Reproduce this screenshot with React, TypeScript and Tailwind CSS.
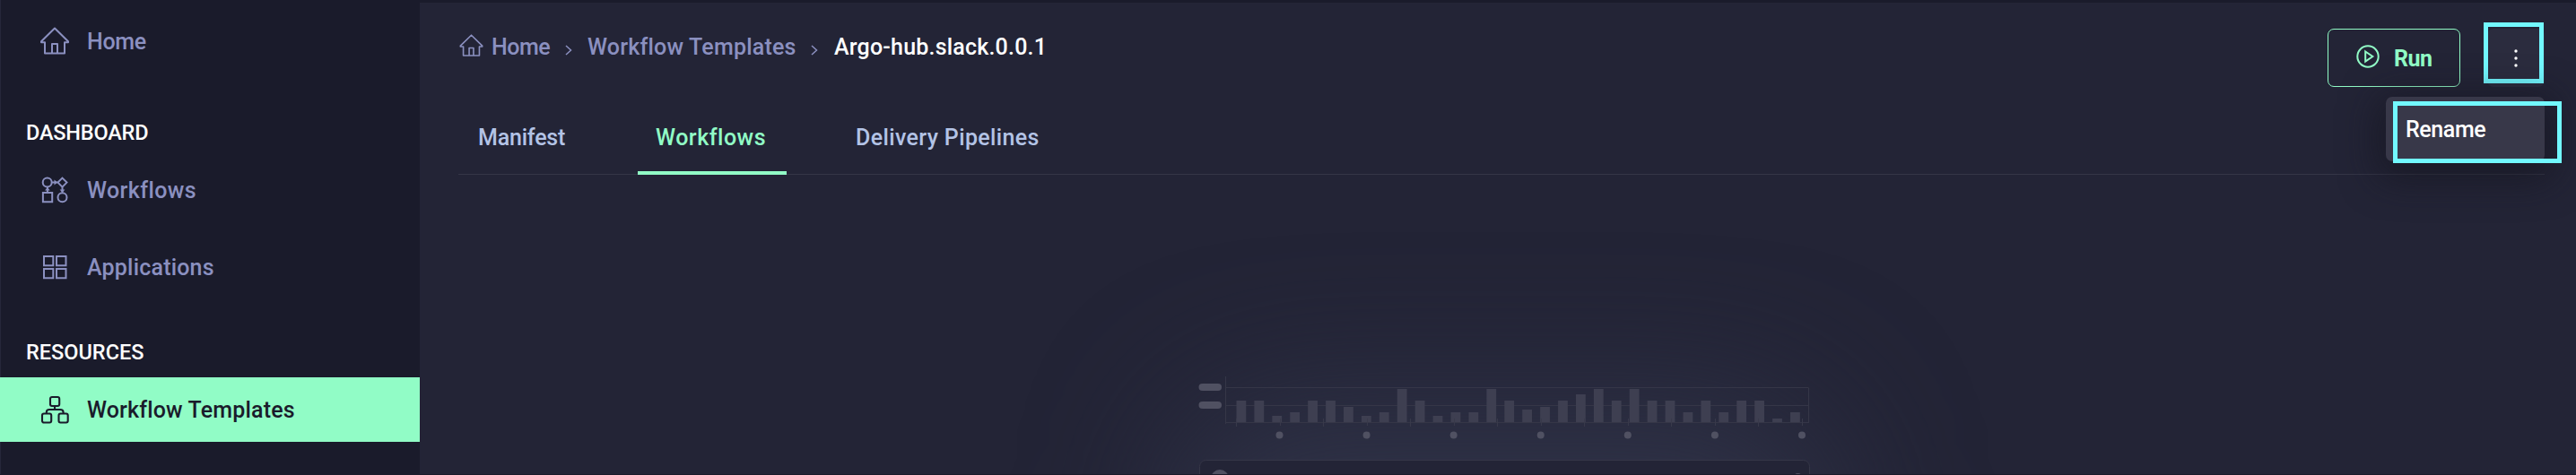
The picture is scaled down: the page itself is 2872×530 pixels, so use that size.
import type { ReactNode } from 'react';

function HomeIcon({ className }: { className: string }) {
  return (
    <svg viewBox="0 0 32 32" className={className} fill="none" stroke="currentColor" strokeWidth="2" strokeLinejoin="round">
      <path d="M16 1.500 1 16.200V17.200H5V29.500H27V17.200H31V16.200Z" />
      <path d="M13 29.500V19H19V29.500" />
    </svg>
  );
}

function FlowIcon() {
  return (
    <svg viewBox="0 0 32 32" className="size-8" fill="none" stroke="currentColor" strokeWidth="2">
      <circle cx="7.700" cy="7.500" r="5" />
      <path d="M24.500 2.600 29.500 7.600 24.500 12.600 19.500 7.600ZM2.900 19H13.200V29.300H2.900ZM12.700 7.500H19M7.900 13V19M24.500 12.600V18.500" />
      <circle cx="24.500" cy="24.200" r="5" />
      <path d="M15.500 4.500 19 7.500 15.500 10.500ZM5 16.500 7.900 13 10.800 16.500ZM21.600 15.500 24.500 19 27.400 15.500Z" fill="currentColor" stroke="none" />
    </svg>
  );
}

function GridIcon() {
  return (
    <svg viewBox="0 0 32 32" className="size-8" fill="none" stroke="currentColor" strokeWidth="2">
      <path d="M4 4H14.300V14.300H4ZM18 4H28.500V14.300H18ZM4 18H14.300V28.300H4ZM18 18H28.500V28.300H18Z" />
    </svg>
  );
}

function TreeIcon() {
  return (
    <svg viewBox="0 0 32 32" className="size-8" fill="none" stroke="currentColor" strokeWidth="2.100">
      <rect x="11" y="2" width="10.200" height="10" rx="2" />
      <rect x="2" y="20.500" width="10.200" height="10" rx="2" />
      <rect x="20.500" y="20.500" width="10.200" height="10" rx="2" />
      <path d="M16 12V16M6.800 20.500V19Q6.800 16 10 16H22Q25.600 16 25.600 19V20.500" />
    </svg>
  );
}

function NavItem({ icon, children, className }: { icon: ReactNode; children: ReactNode; className: string }) {
  return (
    <a className={`flex h-[72px] items-center pl-[45px] text-[25px] font-medium ${className}`}>
      {icon}
      <span className="mt-0.5 ml-5 whitespace-nowrap">{children}</span>
    </a>
  );
}

const heights = [24, 24, 7, 11, 24, 24, 17, 7, 11, 37, 24, 7, 11, 11, 37, 24, 14, 17, 24, 31, 37, 24, 37, 24, 24, 11, 24, 11, 24, 24, 4, 11];

function EmptyChart() {
  return (
    <svg viewBox="468 195 2404 335" className="block h-[335px] w-full shrink-0">
      <defs>
        <filter id="glow" filterUnits="userSpaceOnUse" x="900" y="100" width="1600" height="1100" colorInterpolationFilters="sRGB">
          <feGaussianBlur stdDeviation="80" />
        </filter>
      </defs>
      <rect x="1310" y="450" width="730" height="450" rx="120" fill="#2f3247" filter="url(#glow)" />
      <g fill="#505162">
        <rect x="1336.500" y="428" width="25.500" height="8" rx="4" />
        <rect x="1336.500" y="448" width="25.500" height="8" rx="4" />
      </g>
      <path d="M1366.500 420V473M1367 432.500H2016.500M1367 452.500H2016.500M1366 471.500H2016.500M2016.500 433V472" stroke="#353647" fill="none" />
      <g fill="#3e3f51">
        {heights.map((h, i) => (
          <rect key={i} x={1378.500 + i * 19.920} y={471 - h} width="10.800" height={h} />
        ))}
      </g>
      {Array.from({ length: 7 }, (_, i) => (
        <g key={i}>
          <path d={`M${1378.500 + i * 97} 467V476M${1427.500 + i * 97} 467V475`} stroke="#38394a" />
          <circle cx={1426.500 + i * 97.080} cy="485.600" r="4" fill="#505162" />
        </g>
      ))}
      <rect x="1337.500" y="513.500" width="680" height="60" rx="7" fill="#232436" stroke="#353647" />
      <circle cx="1360" cy="534" r="10" fill="#505162" />
      <rect x="1380" y="529" width="142" height="8" rx="2" fill="#505162" />
      <circle cx="2004.500" cy="533" r="5" fill="#505162" />
    </svg>
  );
}

function Chevron() {
  return (
    <svg viewBox="0 0 8 12" className="mt-[5px] h-3 w-2" fill="none" stroke="currentColor" strokeWidth="1.500">
      <path d="M1 1 6.500 6 1 11" />
    </svg>
  );
}

export default function App() {
  return (
    <div className="relative flex h-[530px] w-[2872px] overflow-hidden bg-[#232436] font-['Roboto',sans-serif]">
      <aside className="w-[468px] shrink-0 bg-[#1a1b2b] pt-[10px] text-[#8b90c0] shadow-[inset_1px_0_#26273a]">
        <NavItem icon={<HomeIcon className="size-8" />} className="tracking-[-0.300px]">Home</NavItem>
        <h2 className="mt-[46px] h-[40px] pl-[29px] text-[23.500px] leading-[40px] font-medium tracking-[-0.200px] text-white">DASHBOARD</h2>
        <NavItem icon={<FlowIcon />} className="mt-[8px] tracking-[0.400px]">Workflows</NavItem>
        <NavItem icon={<GridIcon />} className="mt-[14px] tracking-[0.200px]">Applications</NavItem>
        <h2 className="mt-[39px] h-[40px] pl-[29px] text-[23.500px] leading-[40px] font-medium text-white">RESOURCES</h2>
        <NavItem icon={<TreeIcon />} className="mt-[8px] bg-[#91fcc6] tracking-[0.150px] text-[#1a1b2b]">Workflow Templates</NavItem>
      </aside>
      <main className="flex min-w-0 flex-1 flex-col border-t-[3px] border-[#1a1b2b]">
        <header className="relative flex h-[108px] shrink-0 justify-between pr-[35px] pl-[44px]">
          <nav className="mt-[30px] flex h-10 items-center text-[25px] font-medium whitespace-nowrap text-[#8b90c0]">
            <HomeIcon className="-mt-[5px] h-[26px] w-[27px]" />
            <span className="ml-[9px] w-[82px] tracking-[-0.500px]">Home</span>
            <Chevron />
            <span className="ml-[17px] w-[249px] tracking-[0.200px]">Workflow Templates</span>
            <Chevron />
            <span className="ml-[18px] tracking-[0.200px] text-white">Argo-hub.slack.0.0.1</span>
          </nav>
          <div className="mt-[29px] flex gap-[30px]">
            <button className="flex h-[65px] w-[148px] items-center rounded-[7px] border border-[#91fcc6] pl-[31px] text-[25px] font-bold text-[#91fcc6]">
              <svg viewBox="0 0 26 26" className="-mt-[4px] size-[26px]" fill="none" stroke="currentColor" strokeWidth="2">
                <circle cx="13" cy="13" r="11.700" />
                <path d="M10.200 7.500 18.300 13 10.200 18.500Z" />
              </svg>
              <span className="mt-0.5 ml-4 tracking-[-0.500px]">Run</span>
            </button>
            <button className="flex h-[65px] w-[64px] items-center justify-center rounded-[7px] bg-[#2b2c3e]">
              <svg viewBox="0 0 4 20" className="h-5 w-1" fill="#ffffff">
                <circle cx="2" cy="2" r="1.700" />
                <circle cx="2" cy="10" r="1.700" />
                <circle cx="2" cy="18" r="1.700" />
              </svg>
            </button>
          </div>
          <div className="absolute top-[22px] right-[36px] h-[68px] w-[67px] border-[5px] border-[#72f8ff]" />
          <div className="absolute top-[105px] right-[35px] z-10 flex h-[72px] w-[177px] items-center rounded-[7px] bg-[#383849] pt-0.5 pl-[22px] text-[25px] font-medium tracking-[-0.400px] text-white shadow-[0_10px_40px_10px_rgba(20,20,30,0.600)]">
            Rename
          </div>
          <div className="absolute top-[110px] right-[16px] z-20 h-[69px] w-[188px] border-[5px] border-[#72f8ff]" />
        </header>
        <div className="mr-[35px] ml-[43px] flex h-[84px] shrink-0 border-b border-[#353647] text-[25px] font-medium whitespace-nowrap text-[#b3c3e6]">
          <a className="h-[84px] w-[200px] pl-[22px] leading-[85px] tracking-[-0.200px]">Manifest</a>
          <a className="h-[84px] w-[166px] border-b-4 border-[#91fcc6] pl-[20px] leading-[85px] tracking-[0.500px] text-[#91fcc6]">Workflows</a>
          <a className="h-[84px] pl-[77px] leading-[85px] tracking-[0.360px]">Delivery Pipelines</a>
        </div>
        <EmptyChart />
      </main>
      <div className="absolute inset-x-0 bottom-0 h-px bg-[#1a1b2b]" />
    </div>
  );
}
